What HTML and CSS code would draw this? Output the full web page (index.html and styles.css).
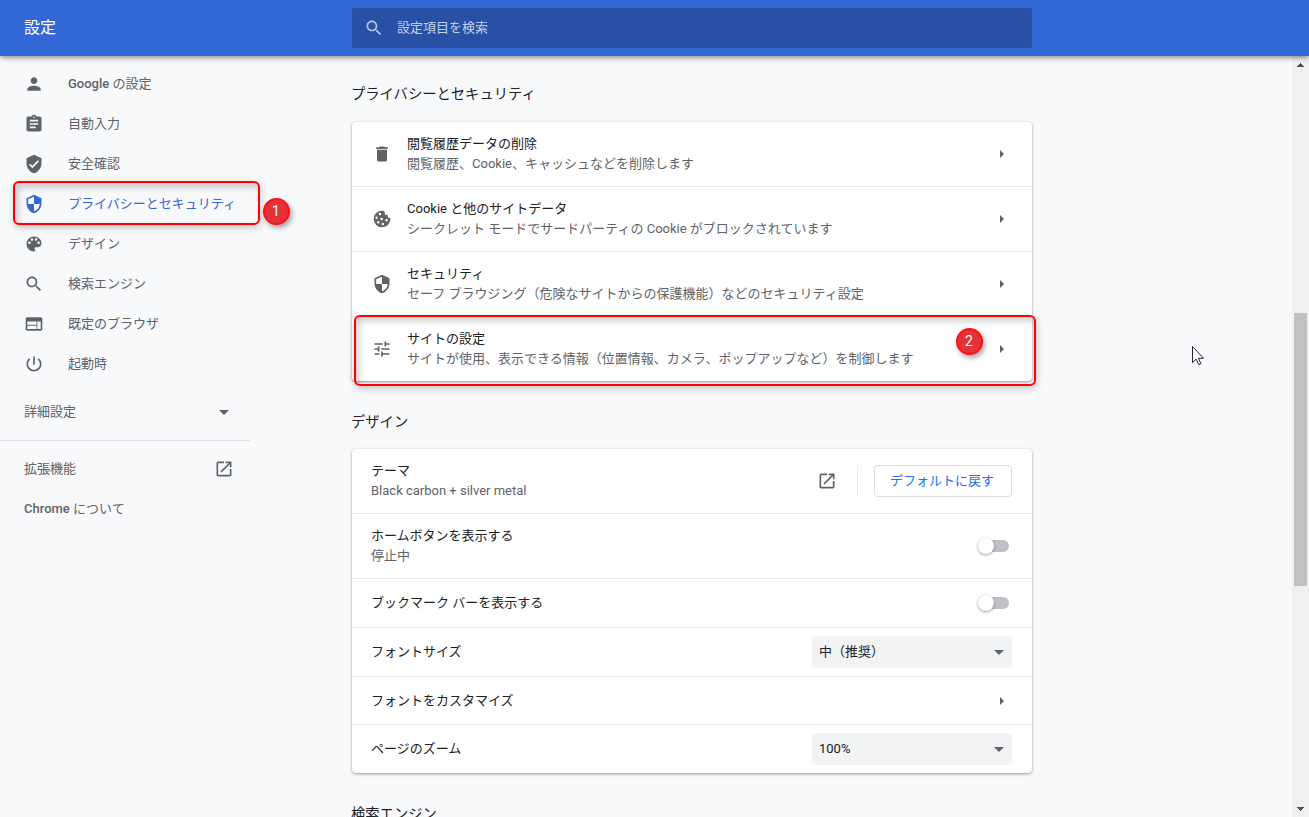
FILE: index.html
```
<!DOCTYPE html>
<html lang="ja">
<head>
<meta charset="utf-8">
<title>設定</title>
<link rel="stylesheet" href="styles.css">
</head>

<body>
<svg class="defs">
	<symbol id="person" viewBox="0 0 24 24"><path d="M12 12c2.21 0 4-1.79 4-4s-1.79-4-4-4-4 1.79-4 4 1.79 4 4 4zm0 2c-2.67 0-8 1.34-8 4v2h16v-2c0-2.66-5.33-4-8-4z"/></symbol>
	<symbol id="assignment" viewBox="0 0 24 24"><path d="M19 3h-4.18C14.4 1.84 13.3 1 12 1c-1.3 0-2.4.84-2.82 2H5c-1.1 0-2 .9-2 2v14c0 1.1.9 2 2 2h14c1.1 0 2-.9 2-2V5c0-1.1-.9-2-2-2zm-7 0c.55 0 1 .45 1 1s-.45 1-1 1-1-.45-1-1 .45-1 1-1zm2 14H7v-2h7v2zm3-4H7v-2h10v2zm0-4H7V7h10v2z"/></symbol>
	<symbol id="verified" viewBox="0 0 24 24"><path d="M12 1L3 5v6c0 5.55 3.84 10.74 9 12 5.16-1.26 9-6.45 9-12V5l-9-4zm-2 16l-4-4 1.41-1.41L10 14.17l6.59-6.59L18 9l-8 8z"/></symbol>
	<symbol id="security" viewBox="0 0 24 24"><path d="M12 1L3 5v6c0 5.55 3.84 10.74 9 12 5.16-1.26 9-6.45 9-12V5l-9-4zm0 10.99h7c-.53 4.12-3.28 7.79-7 8.94V12H5V6.3l7-3.11v8.8z"/></symbol>
	<symbol id="palette" viewBox="0 0 24 24"><path d="M12 3c-4.97 0-9 4.03-9 9s4.03 9 9 9c.83 0 1.5-.67 1.5-1.5 0-.39-.15-.74-.39-1.01-.23-.26-.38-.61-.38-.99 0-.83.67-1.5 1.5-1.5H16c2.76 0 5-2.24 5-5 0-4.42-4.03-8-9-8zm-5.5 9c-.83 0-1.5-.67-1.5-1.5S5.67 9 6.5 9 8 9.67 8 10.5 7.33 12 6.5 12zm3-4C8.67 8 8 7.33 8 6.5S8.67 5 9.5 5s1.5.67 1.5 1.5S10.33 8 9.5 8zm5 0c-.83 0-1.5-.67-1.5-1.5S13.67 5 14.5 5s1.5.67 1.5 1.5S15.33 8 14.5 8zm3 4c-.83 0-1.5-.67-1.5-1.5S16.67 9 17.5 9s1.5.67 1.5 1.5-.67 1.5-1.5 1.5z"/></symbol>
	<symbol id="search" viewBox="0 0 24 24"><path d="M15.5 14h-.79l-.28-.27C15.41 12.59 16 11.11 16 9.5 16 5.91 13.09 3 9.5 3S3 5.91 3 9.5 5.91 16 9.5 16c1.61 0 3.09-.59 4.23-1.57l.27.28v.79l5 4.99L20.49 19l-4.99-5zm-6 0C7.01 14 5 11.99 5 9.5S7.01 5 9.5 5 14 7.01 14 9.5 11.99 14 9.5 14z"/></symbol>
	<symbol id="web" viewBox="0 0 24 24"><path d="M20 4H4c-1.1 0-1.99.9-1.99 2L2 18c0 1.1.9 2 2 2h16c1.1 0 2-.9 2-2V6c0-1.1-.9-2-2-2zm-5 14H4v-4h11v4zm0-5H4V9h11v4zm5 5h-4V9h4v9z"/></symbol>
	<symbol id="power" viewBox="0 0 24 24"><path d="M13 3h-2v10h2V3zm4.83 2.17l-1.42 1.42C17.99 7.86 19 9.81 19 12c0 3.87-3.13 7-7 7s-7-3.13-7-7c0-2.19 1.01-4.14 2.58-5.42L6.17 5.17C4.23 6.82 3 9.26 3 12c0 4.97 4.03 9 9 9s9-4.03 9-9c0-2.74-1.23-5.18-3.17-6.83z"/></symbol>
	<symbol id="launch" viewBox="0 0 24 24"><path d="M19 19H5V5h7V3H5c-1.11 0-2 .9-2 2v14c0 1.1.89 2 2 2h14c1.1 0 2-.9 2-2v-7h-2v7zM14 3v2h3.59l-9.83 9.83 1.41 1.41L19 6.41V10h2V3h-7z"/></symbol>
	<symbol id="trash" viewBox="0 0 24 24"><path d="M6 19c0 1.1.9 2 2 2h8c1.1 0 2-.9 2-2V7H6v12zM19 4h-3.5l-1-1h-5l-1 1H5v2h14V4z"/></symbol>
	<symbol id="cookie" viewBox="0 0 24 24"><path fill-rule="evenodd" d="M12 2a10 10 0 1 0 10 10v-1.500h-3V8.500a1.500 1.500 0 0 0-1.500-1.500H15.500V4.500A1.500 1.500 0 0 0 14 3V2.200A10 10 0 0 0 12 2zM9.500 4.500a1.500 1.500 0 1 1 0 3 1.500 1.500 0 0 1 0-3zM5.500 9a1.500 1.500 0 1 1 0 3 1.500 1.500 0 0 1 0-3zM11.500 10.500a1.500 1.500 0 1 1 0 3 1.500 1.500 0 0 1 0-3zM17.500 12a1.500 1.500 0 1 1 0 3 1.500 1.500 0 0 1 0-3zM7.500 14.500a1.500 1.500 0 1 1 0 3 1.500 1.500 0 0 1 0-3zM13 16.500a1.500 1.500 0 1 1 0 3 1.500 1.500 0 0 1 0-3z"/></symbol>
	<symbol id="tune" viewBox="0 0 24 24"><path d="M3 17v2h6v-2H3zM3 5v2h10V5H3zm10 16v-2h8v-2h-8v-2h-2v6h2zM7 9v2H3v2h4v2h2V9H7zm14 4v-2H11v2h10zm-6-4h2V7h4V5h-4V3h-2v6z"/></symbol>
</svg>

<div class="header">
	<h1>設定</h1>
	<div class="search">
		<svg class="icon"><use href="#search"/></svg>
		<span>設定項目を検索</span>
	</div>
</div>

<div class="page">
	<div class="sidebar">
		<ul class="menu">
			<li><svg class="icon"><use href="#person"/></svg><a><b>Google</b> の設定</a></li>
			<li><svg class="icon"><use href="#assignment"/></svg><a>自動入力</a></li>
			<li><svg class="icon"><use href="#verified"/></svg><a>安全確認</a></li>
			<li class="active">
				<svg class="icon"><use href="#security"/></svg><a>プライバシーとセキュリティ</a>
				<span class="mark mark_menu"></span>
				<span class="num num_menu">1</span>
			</li>
			<li><svg class="icon"><use href="#palette"/></svg><a>デザイン</a></li>
			<li><svg class="icon"><use href="#search"/></svg><a>検索エンジン</a></li>
			<li><svg class="icon"><use href="#web"/></svg><a>既定のブラウザ</a></li>
			<li><svg class="icon"><use href="#power"/></svg><a>起動時</a></li>
		</ul>
		<div class="advanced"><a>詳細設定</a><i class="down"></i></div>
		<ul class="sub_menu">
			<li><a>拡張機能</a><svg class="icon"><use href="#launch"/></svg></li>
			<li><a><b>Chrome</b> について</a></li>
		</ul>
	</div>

	<div class="main">
		<h2 class="first">プライバシーとセキュリティ</h2>
		<div class="card">
			<div class="row tall">
				<svg class="icon"><use href="#trash"/></svg>
				<div class="text"><p>閲覧履歴データの削除</p><p class="sub">閲覧履歴、Cookie、キャッシュなどを削除します</p></div>
				<i class="right"></i>
			</div>
			<div class="row tall">
				<svg class="icon"><use href="#cookie"/></svg>
				<div class="text"><p>Cookie と他のサイトデータ</p><p class="sub">シークレット モードでサードパーティの Cookie がブロックされています</p></div>
				<i class="right"></i>
			</div>
			<div class="row tall">
				<svg class="icon"><use href="#security"/></svg>
				<div class="text"><p>セキュリティ</p><p class="sub">セーフ ブラウジング（危険なサイトからの保護機能）などのセキュリティ設定</p></div>
				<i class="right"></i>
			</div>
			<div class="row tall">
				<svg class="icon"><use href="#tune"/></svg>
				<div class="text"><p>サイトの設定</p><p class="sub">サイトが使用、表示できる情報（位置情報、カメラ、ポップアップなど）を制御します</p></div>
				<i class="right"></i>
				<span class="mark mark_row"></span>
				<span class="num num_row">2</span>
			</div>
		</div>

		<h2>デザイン</h2>
		<div class="card">
			<div class="row tall">
				<div class="text"><p>テーマ</p><p class="sub">Black carbon + silver metal</p></div>
				<svg class="icon"><use href="#launch"/></svg>
				<div class="reset"><a class="btn">デフォルトに戻す</a></div>
			</div>
			<div class="row tall">
				<div class="text"><p>ホームボタンを表示する</p><p class="sub">停止中</p></div>
				<span class="toggle"></span>
			</div>
			<div class="row">
				<div class="text"><p>ブックマーク バーを表示する</p></div>
				<span class="toggle"></span>
			</div>
			<div class="row">
				<div class="text"><p>フォントサイズ</p></div>
				<div class="select"><span>中（推奨）</span><i class="down"></i></div>
			</div>
			<div class="row fonts">
				<div class="text"><p>フォントをカスタマイズ</p></div>
				<i class="right"></i>
			</div>
			<div class="row">
				<div class="text"><p>ページのズーム</p></div>
				<div class="select"><span>100%</span><i class="down"></i></div>
			</div>
		</div>

		<h2>検索エンジン</h2>
	</div>

	<div class="scrollbar">
		<svg class="arrow" viewBox="0 0 7 4"><path d="M3 0h1v1h1v1h1v1h1v1H0V3h1V2h1V1h1z"/></svg>
		<div class="thumb"></div>
		<svg class="arrow arrow_down" viewBox="0 0 7 4"><path d="M3 4h1V3h1V2h1V1h1V0H0v1h1v1h1v1h1z"/></svg>
	</div>
</div>

<svg class="cursor" viewBox="0 0 13 20"><path d="M.5.5v16l3.700-3.400 2.500 5.600 2.200-1-2.400-5.400h5z"/></svg>
</body>
</html>
```
FILE: styles.css
```
*{margin:0;padding:0;box-sizing:border-box;}
body{
	height:817px;
	overflow:hidden;
	background:#F8F9FB;
	font:13px/20px Roboto,"Noto Sans CJK JP",sans-serif;
	color:#202124;
	display:flex;
	flex-direction:column;
}
li{list-style:none;}
.defs{display:none;}
.icon{width:20px;height:20px;fill:#5F6368;flex:none;display:block;}
.header{
	height:56px;
	flex:none;
	background:#3367D6;
	display:flex;
	align-items:center;
	position:relative;
	z-index:1;
	box-shadow:0 1px 6px rgba(0,0,0,0.55);
}
.header h1{
	width:352px;
	padding-left:24px;
	font-size:16px;
	font-weight:400;
	color:#fff;
}
.search{
	width:680px;
	height:40px;
	padding-left:12px;
	border-radius:2px;
	background:#2851A6;
	display:flex;
	align-items:center;
	gap:13px;
	color:#C2CFEA;
}
.search .icon{fill:#B5C4E5;}
.page{
	flex:1;
	min-height:0;
	display:flex;
}
.sidebar{
	width:352px;
	padding-top:8px;
	color:#5F6368;
}
.sidebar b{font-weight:500;}
.menu li{
	height:40px;
	padding-left:24px;
	display:flex;
	align-items:center;
	gap:24px;
	position:relative;
}
.menu .active{color:#3367D6;}
.active .icon{fill:#3367D6;}
.advanced,.sub_menu li{
	width:250px;
	height:40px;
	padding:0 16px 0 24px;
	display:flex;
	align-items:center;
	justify-content:space-between;
}
.advanced{margin-top:8px;padding-right:21px;}
.sub_menu{
	width:250px;
	margin-top:8px;
	padding-top:8px;
	border-top:1px solid #E0E1E4;
}
.main{width:680px;}
.main h2{
	height:68px;
	padding-top:31px;
	margin-left:-1px;
	font-size:14.3px;
	font-weight:400;
	line-height:20px;
}
.main .first{height:66px;padding-top:28px;}
.card{
	background:#fff;
	border-radius:4px;
	box-shadow:0 1px 2px rgba(60,64,67,0.35),0 1px 3px 1px rgba(60,64,67,0.15);
}
.row{
	height:49px;
	padding:0 20px 0 19px;
	border-top:1px solid #E8EAED;
	display:flex;
	align-items:center;
	position:relative;
}
.row.tall{height:65px;}
.row.fonts{height:48px;}
.row.tall:first-child{border-top:none;height:64px;}
.text{flex:1;}
.row > .icon:first-child{margin-left:1px;}
.icon + .text{padding-left:15px;}
.sub{color:#5F6368;}
.right{
	margin-right:8px;
	border:4px solid transparent;
	border-left-color:#5F6368;
	border-right:none;
}
.down{
	border:5px solid transparent;
	border-top-color:#5F6368;
	border-bottom:none;
}
.reset{
	height:32px;
	margin-left:20px;
	padding-left:16px;
	border-left:1px solid #E8EAED;
}
.btn{
	display:block;
	width:138px;
	height:32px;
	padding-right:2px;
	border:1px solid #DADCE0;
	border-radius:4px;
	line-height:29px;
	text-align:center;
	color:#1A73E8;
}
.toggle{
	width:28px;
	height:12px;
	margin-right:3px;
	border-radius:6px;
	background:#BDC1C6;
	position:relative;
}
.toggle:before{
	content:"";
	position:absolute;
	left:-3px;
	top:-2px;
	width:16px;
	height:16px;
	border-radius:50%;
	background:#fff;
	box-shadow:0 1px 3px rgba(0,0,0,0.4);
}
.select{
	width:200px;
	height:32px;
	padding:0 8px 0 7px;
	border-radius:4px;
	background:#F1F3F4;
	display:flex;
	align-items:center;
	justify-content:space-between;
}
.scrollbar{
	width:17px;
	margin-left:auto;
	padding:7px 2px 6px;
	background:#F0F0F0;
	display:flex;
	flex-direction:column;
	align-items:center;
}
.arrow{width:7px;height:4px;fill:#505050;}
.thumb{width:13px;height:273px;margin-top:246px;background:#C1C1C1;}
.arrow_down{margin-top:auto;}
/* callouts */
.mark{
	position:absolute;
	border:2px solid #FF0000;
	border-radius:6px;
	box-shadow:1px 3px 7px rgba(0,0,0,0.2),inset 3px 4px 7px rgba(0,0,0,0.2);
}
.mark_menu{left:13px;top:-3px;width:247px;height:44px;}
.mark_row{left:2px;top:-2px;width:682px;height:71px;}
.num{
	position:absolute;
	width:27px;
	height:27px;
	padding-right:1px;
	border:2px solid #FF1015;
	border-radius:50%;
	background:#E33238;
	box-shadow:2px 3px 5px rgba(0,0,0,0.35);
	font-size:14px;
	line-height:22px;
	text-align:center;
	color:#fff;
}
.num_menu{left:263px;top:14px;}
.num_row{left:604px;top:11px;}
.cursor{
	position:absolute;
	left:1192px;
	top:346px;
	width:13px;
	height:20px;
	fill:#fff;
	stroke:#22223A;
}
```
